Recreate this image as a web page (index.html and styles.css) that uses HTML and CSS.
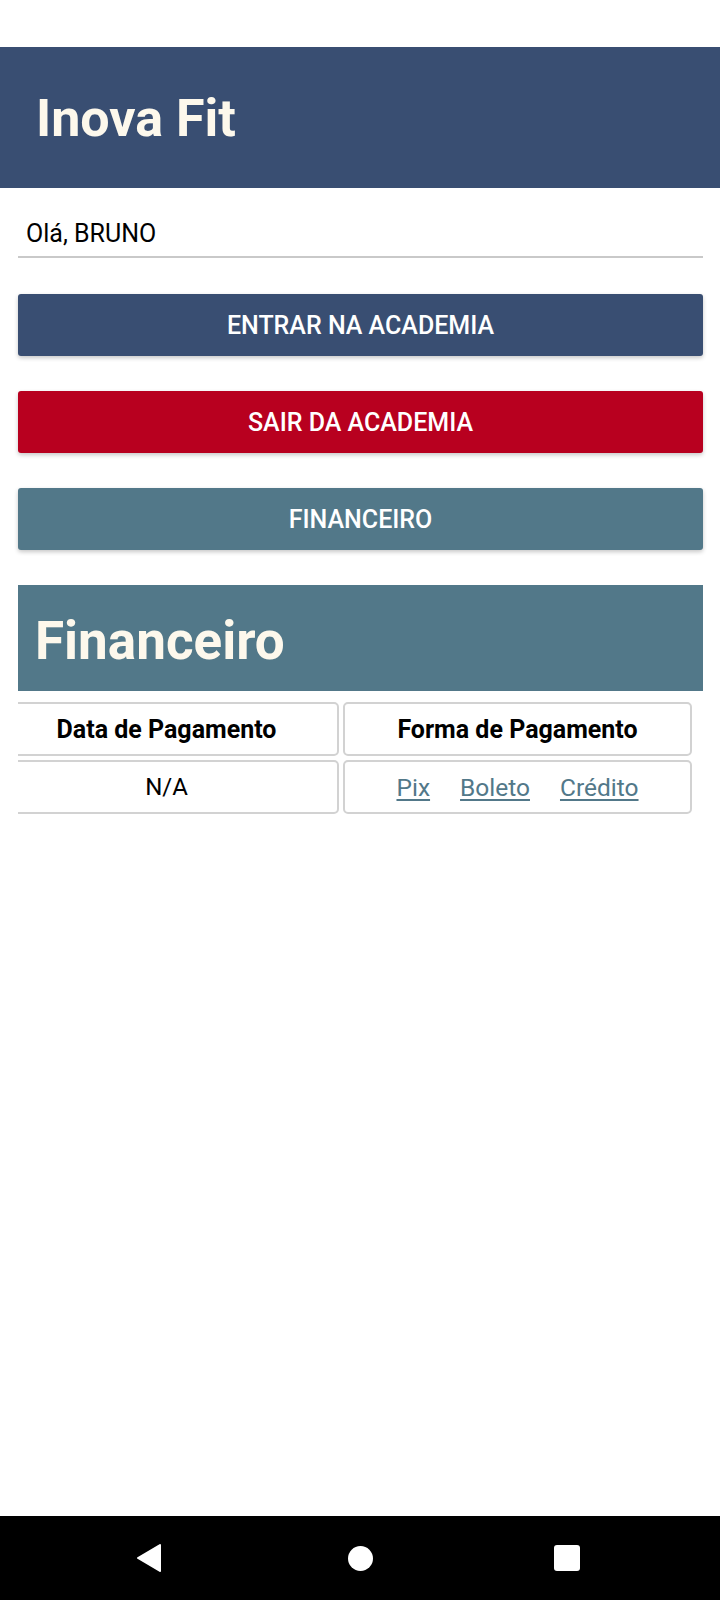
FILE: index.html
```html
<!DOCTYPE html>
<html lang="pt-BR">
<head>
<meta charset="utf-8">
<title>Inova Fit</title>
<link rel="stylesheet" href="styles.css">
</head>
<body>
<div class="screen">
  <div class="status"></div>
  <header class="appbar"><h1 class="app-title">Inova Fit</h1></header>
  <main class="content">
    <div class="greeting">Olá, BRUNO</div>
    <button class="btn btn-enter">ENTRAR NA ACADEMIA</button>
    <button class="btn btn-exit">SAIR DA ACADEMIA</button>
    <button class="btn btn-fin">FINANCEIRO</button>
    <section class="fin">
      <h2 class="fin-title">Financeiro</h2>
      <div class="table-clip">
        <div class="table">
          <div class="cell head">Data de Pagamento</div>
          <div class="cell head">Forma de Pagamento</div>
          <div class="cell">N/A</div>
          <div class="cell links"><a href="#">Pix</a><a href="#">Boleto</a><a href="#">Crédito</a></div>
        </div>
      </div>
    </section>
  </main>
  <nav class="navbar">
    <svg class="nav-ico" width="28" height="30" viewBox="0 0 28 30"><path d="M25 2 L3 15 L25 28 Z" fill="#fff" stroke="#fff" stroke-width="2" stroke-linejoin="round"/></svg>
    <span class="nav-home"></span>
    <span class="nav-recent"></span>
  </nav>
</div>
</body>
</html>
```
FILE: styles.css
```css
html, body {
  margin: 0;
  padding: 0;
  background: #fff;
}
body {
  font-family: Roboto, "Noto Sans", sans-serif;
  color: #000;
}
.screen {
  width: 720px;
  height: 1600px;
  display: flex;
  flex-direction: column;
}
.status {
  height: 47px;
  flex: none;
}
.appbar {
  background: #394e72;
  height: 141px;
  flex: none;
  box-sizing: border-box;
  padding: 42px 36px 0;
}
.app-title {
  margin: 0;
  font-size: 52px;
  line-height: 60px;
  font-weight: 700;
  color: #fdf8ec;
}
.content {
  flex: 1;
  display: flex;
  flex-direction: column;
  padding: 0 17px 0 18px;
}
.greeting {
  margin-top: 31px;
  padding: 0 0 8px 8px;
  font-size: 25px;
  line-height: 29px;
  border-bottom: 2px solid #c9c9c9;
}
.btn {
  display: block;
  width: 100%;
  height: 62px;
  border: none;
  border-radius: 3px;
  font-family: Roboto, "Noto Sans", sans-serif;
  font-size: 25px;
  font-weight: 500;
  color: #fff;
  box-shadow: 0 2px 4px rgba(0,0,0,0.22);
  margin-top: 35px;
  padding: 0;
}
.btn-enter { background: #394e72; margin-top: 36px; }
.btn-exit { background: #b8001f; }
.btn-fin { background: #527889; }
.fin {
  margin-top: 35px;
}
.fin-title {
  margin: 0;
  background: #527889;
  color: #fdf8ec;
  font-size: 53px;
  font-weight: 700;
  line-height: 64px;
  padding: 24px 17px 18px;
}
.table-clip {
  overflow: hidden;
  margin-top: 11px;
}
.table {
  margin-left: -24px;
  width: 698px;
  display: grid;
  grid-template-columns: 345px 349px;
  column-gap: 4px;
  row-gap: 4px;
}
.cell {
  height: 54px;
  box-sizing: border-box;
  border: 2px solid #d2d2d2;
  border-radius: 5px;
  display: flex;
  align-items: center;
  justify-content: center;
  font-size: 24px;
}
.cell.head {
  font-weight: 700;
  font-size: 25px;
}
.links {
  gap: 30px;
}
.links a {
  color: #527889;
  text-decoration: underline;
  text-underline-offset: 3px;
  font-size: 24.5px;
}
.navbar {
  flex: none;
  height: 84px;
  background: #000;
  position: relative;
}
.nav-ico {
  position: absolute;
  left: 135px;
  top: 27px;
}
.nav-home {
  position: absolute;
  left: 348px;
  top: 30px;
  width: 25px;
  height: 25px;
  border-radius: 50%;
  background: #fff;
}
.nav-recent {
  position: absolute;
  left: 554px;
  top: 29px;
  width: 26px;
  height: 26px;
  border-radius: 3px;
  background: #fff;
}
```
